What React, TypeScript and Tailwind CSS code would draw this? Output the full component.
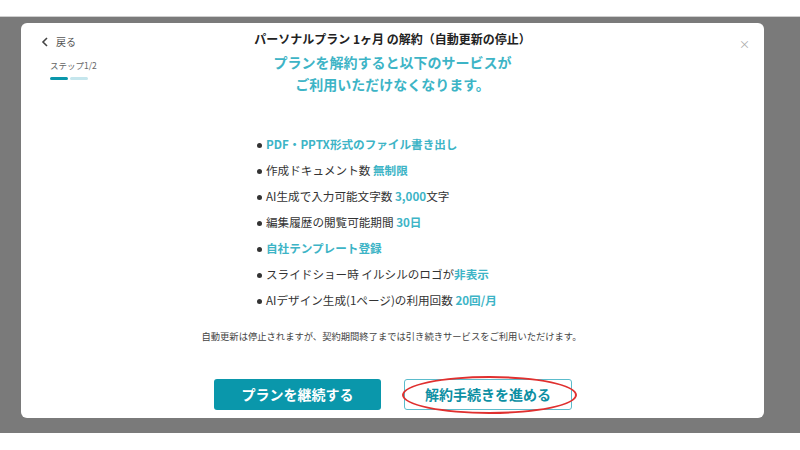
import React from 'react';

const FONT = { fontFamily: '"Noto Sans CJK JP", "Noto Sans", sans-serif' };

type Part = { t: string; hl?: boolean };

const items: Part[][] = [
  [{ t: 'PDF・PPTX形式のファイル書き出し', hl: true }],
  [{ t: '作成ドキュメント数 ' }, { t: '無制限', hl: true }],
  [{ t: 'AI生成で入力可能文字数 ' }, { t: '3,000', hl: true }, { t: '文字' }],
  [{ t: '編集履歴の閲覧可能期間 ' }, { t: '30日', hl: true }],
  [{ t: '自社テンプレート登録', hl: true }],
  [{ t: 'スライドショー時 イルシルのロゴが' }, { t: '非表示', hl: true }],
  [{ t: 'AIデザイン生成(1ページ)の利用回数 ' }, { t: '20回/月', hl: true }],
];

function App(): JSX.Element {
  return (
    <div className="w-[800px] h-[450px] bg-white overflow-hidden" style={FONT}>
      <div className="h-[16px] bg-white" />
      <div className="h-px bg-[#cfcfcf]" />
      <div className="h-[416px] bg-[#7a7a7a] pt-[6px]">
        {/* Modal */}
        <div className="ml-[21px] w-[743px] h-[395px] bg-white rounded-md">
          <div className="grid grid-cols-[180px_1fr_180px] pt-[6px]">
            {/* Back + steps */}
            <div className="pl-[20px] pt-[5px]">
              <div className="flex items-center gap-[7px] text-[10px] text-[#555] leading-[16px]">
                <svg width="8" height="10" viewBox="0 0 8 10" fill="none">
                  <path d="M6 1L2 5l4 4" stroke="#444" strokeWidth="1.6" />
                </svg>
                <span>戻る</span>
              </div>
              <div className="pl-[9px] mt-[8px] text-[8.5px] text-[#666] leading-[14px]">ステップ1/2</div>
              <div className="pl-[9px] mt-[5px] flex gap-[2px]">
                <div className="w-[18px] h-[3px] rounded-full bg-[#0a97ab]" />
                <div className="w-[18px] h-[3px] rounded-full bg-[#c5e6ed]" />
              </div>
            </div>

            {/* Title */}
            <div className="text-center">
              <div className="text-[12px] font-bold text-[#222] leading-[20px]">
                パーソナルプラン 1ヶ月 の解約（自動更新の停止）
              </div>
              <div className="mt-[2px] text-[14px] font-bold text-[#3db4c6] leading-[22px]">
                プランを解約すると以下のサービスが
                <br />
                ご利用いただけなくなります。
              </div>
            </div>

            {/* Close */}
            <div className="flex justify-end pr-[14px] pt-[7px]">
              <span className="text-[11px] text-[#aaa] leading-[16px]">×</span>
            </div>
          </div>

          {/* List */}
          <ul className="ml-[236px] mt-[37px]">
            {items.map((parts, i) => (
              <li key={i} className="flex items-center h-[26px] text-[11.6px] text-[#333]">
                <span className="w-[5px] h-[5px] rounded-full bg-[#333] mr-[4px]" />
                <span>
                  {parts.map((p, j) => (
                    <span key={j} className={p.hl ? 'font-bold text-[#3db4c6]' : ''}>
                      {p.t}
                    </span>
                  ))}
                </span>
              </li>
            ))}
          </ul>

          <p className="mt-[14px] text-center text-[9.3px] leading-[16px] text-[#444] pr-[2px]">
            自動更新は停止されますが、契約期間終了までは引き続きサービスをご利用いただけます。
          </p>

          {/* Buttons */}
          <div className="mt-[35px] ml-[193px] flex gap-[23px]">
            <button className="w-[167px] h-[31px] rounded-[3px] bg-[#0a97ab] text-white text-[14px] font-bold">
              プランを継続する
            </button>
            <div className="relative">
              <button className="w-[168px] h-[31px] rounded-[3px] border border-[#5bbccc] bg-white text-[#0d8fa3] text-[14px] font-bold">
                解約手続きを進める
              </button>
              <div className="absolute -left-[2px] -right-[5px] -top-[3px] -bottom-[4px] rounded-[50%] border-2 border-[#e0302f] pointer-events-none" />
            </div>
          </div>
        </div>
      </div>
      <div className="h-[17px] bg-white" />
    </div>
  );
}

export default App;
